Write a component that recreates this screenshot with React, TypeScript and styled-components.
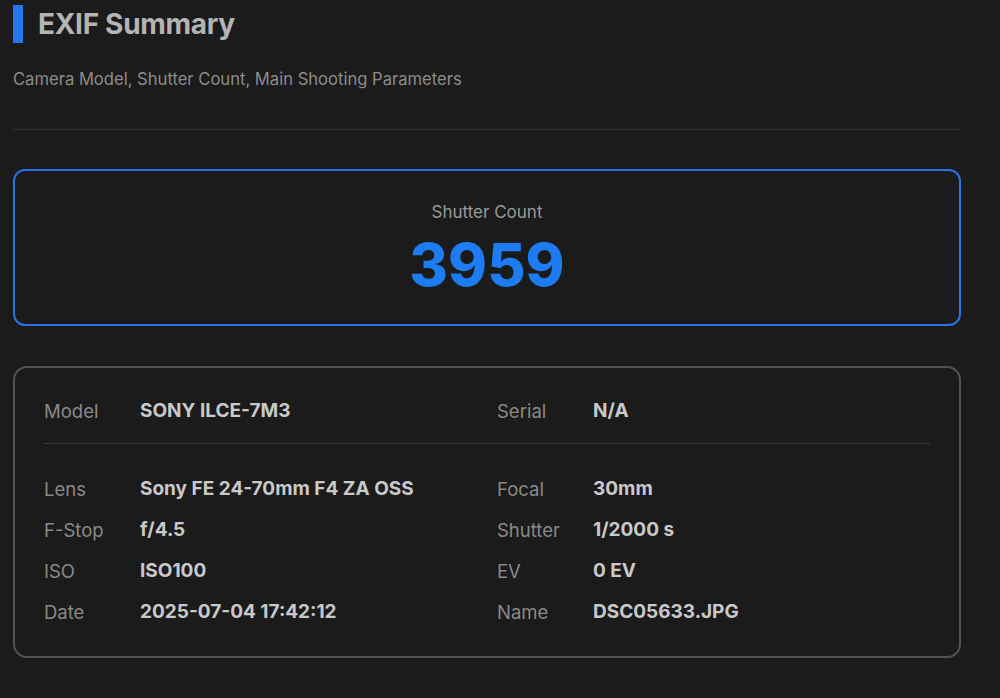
import React from 'react';
import styled, { createGlobalStyle } from 'styled-components';

const GlobalStyle = createGlobalStyle`
  html, body {
    margin: 0;
    padding: 0;
    background: #1b1b1b;
  }
  body {
    font-family: Inter, "Noto Sans", sans-serif;
  }
`;

const Page = styled.div`
  width: 948px;
  padding: 5px 13px 0 13px;
`;

const TitleRow = styled.div`
  display: flex;
  align-items: center;
  height: 38px;
`;

const TitleBar = styled.span`
  width: 10px;
  height: 38px;
  background: #1f78ee;
  margin-right: 15px;
`;

const Title = styled.h1`
  margin: 0;
  font-size: 28px;
  font-weight: 700;
  color: #b4b4b4;
  letter-spacing: -0.3px;
`;

const Subtitle = styled.p`
  margin: 26px 0 0 0;
  font-size: 16.6px;
  line-height: 20px;
  color: #8c8c8c;
`;

const Divider = styled.hr`
  margin: 40px 0 0 0;
  border: none;
  border-top: 1px solid #333;
`;

const CountCard = styled.section`
  margin-top: 39px;
  height: 153px;
  border: 2px solid #2a72e6;
  border-radius: 12px;
  display: flex;
  flex-direction: column;
  align-items: center;
`;

const CountLabel = styled.div`
  margin-top: 31px;
  font-size: 17px;
  line-height: 20px;
  color: #9a9a9a;
`;

const CountValue = styled.div`
  margin-top: 10px;
  font-size: 59px;
  line-height: 66px;
  font-weight: 800;
  color: #1e7cf2;
`;

const InfoCard = styled.section`
  margin-top: 40px;
  height: 288px;
  border: 2px solid #525252;
  border-radius: 14px;
  padding: 0 29px;
`;

const Grid = styled.div`
  display: grid;
  grid-template-columns: 1fr 1fr;
  column-gap: 20px;
`;

const Field = styled.div`
  display: flex;
  align-items: center;
  height: 41px;
`;

const Label = styled.span`
  width: 96px;
  font-size: 18.5px;
  color: #8a8a8a;
`;

const Value = styled.span`
  font-size: 19px;
  font-weight: 700;
  color: #c9c9c9;
`;

const InnerDivider = styled.div`
  height: 1px;
  background: #3a3a3a;
  margin: 12px 0 24px 0;
`;

const TopGrid = styled(Grid)`
  padding-top: 22px;
`;

const rows: [string, string][][] = [
  [['Lens', 'Sony FE 24-70mm F4 ZA OSS'], ['Focal', '30mm']],
  [['F-Stop', 'f/4.5'], ['Shutter', '1/2000 s']],
  [['ISO', 'ISO100'], ['EV', '0 EV']],
  [['Date', '2025-07-04 17:42:12'], ['Name', 'DSC05633.JPG']],
];

export default function App() {
  return (
    <>
      <GlobalStyle />
      <Page>
        <TitleRow>
          <TitleBar />
          <Title>EXIF Summary</Title>
        </TitleRow>
        <Subtitle>Camera Model, Shutter Count, Main Shooting Parameters</Subtitle>
        <Divider />
        <CountCard>
          <CountLabel>Shutter Count</CountLabel>
          <CountValue>3959</CountValue>
        </CountCard>
        <InfoCard>
          <TopGrid>
            <Field>
              <Label>Model</Label>
              <Value>SONY ILCE-7M3</Value>
            </Field>
            <Field>
              <Label>Serial</Label>
              <Value>N/A</Value>
            </Field>
          </TopGrid>
          <InnerDivider />
          <Grid>
            {rows.flat().map(([k, v]) => (
              <Field key={k}>
                <Label>{k}</Label>
                <Value>{v}</Value>
              </Field>
            ))}
          </Grid>
        </InfoCard>
      </Page>
    </>
  );
}
